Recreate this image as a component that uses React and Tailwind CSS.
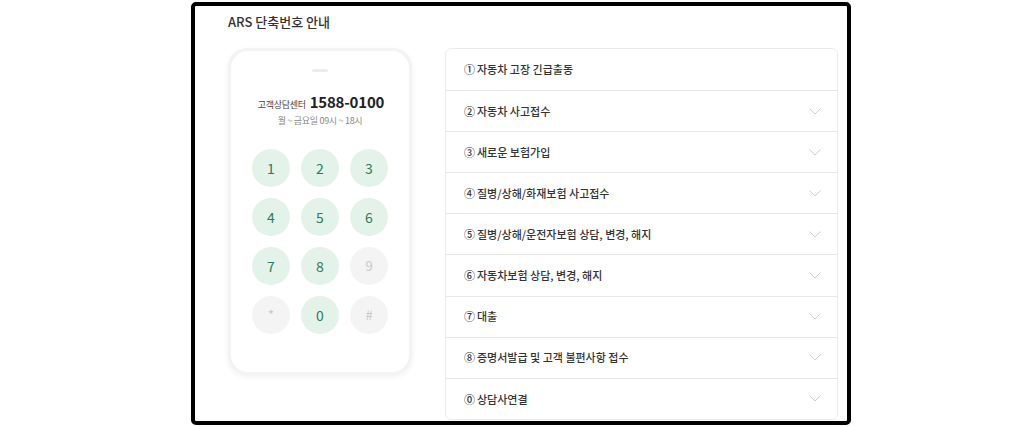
import React from "react";

const font = { fontFamily: '"Noto Sans CJK KR", "Noto Sans", sans-serif' };

function Chevron() {
  return (
    <svg width="12" height="7" viewBox="0 0 12 7" fill="none">
      <path d="M0.5 0.5 L6 6 L11.5 0.5" stroke="#cfcfcf" strokeWidth="1" />
    </svg>
  );
}

const items = [
  ["①", "자동차 고장 긴급출동", false],
  ["②", "자동차 사고접수", true],
  ["③", "새로운 보험가입", true],
  ["④", "질병/상해/화재보험 사고접수", true],
  ["⑤", "질병/상해/운전자보험 상담, 변경, 해지", true],
  ["⑥", "자동차보험 상담, 변경, 해지", true],
  ["⑦", "대출", true],
  ["⑧", "증명서발급 및 고객 불편사항 접수", true],
  ["⓪", "상담사연결", true],
];

const keys = [
  ["1", true], ["2", true], ["3", true],
  ["4", true], ["5", true], ["6", true],
  ["7", true], ["8", true], ["9", false],
  ["*", false], ["0", true], ["#", false],
];

export default function App() {
  return (
    <div className="w-[1024px] h-[427px] bg-white overflow-hidden" style={font}>
      <div className="ml-[191px] mt-[2px] w-[660px] h-[423px] border-4 border-black rounded-[5px] overflow-hidden bg-white">
        <div className="pl-[33px] pr-[9px]">
          <div className="pt-[7px] h-[42px] text-[13px] leading-[18px] font-medium text-[#333]">ARS 단축번호 안내</div>
          <div className="flex gap-[33px]">
            <div className="w-[184px] h-[327px] shrink-0 rounded-[20px] border-[3px] border-[#f3f3f3] shadow-[0_2px_6px_rgba(0,0,0,0.06)] bg-white flex flex-col items-center">
              <div className="mt-[18px] w-[16px] h-[3px] rounded-full bg-[#ececec]" />
              <div className="mt-[19px] flex items-baseline gap-[4px] pl-[2px]">
                <span className="text-[9px] text-[#444] tracking-[-0.3px]">고객상담센터</span>
                <span className="text-[15px] leading-[22px] font-bold text-[#222] tracking-[-0.2px]">1588-0100</span>
              </div>
              <div className="text-[9px] leading-[13px] text-[#888] mt-[1px] tracking-[-0.3px]">월 ~ 금요일 09시 ~ 18시</div>
              <div className="mt-[22px] grid grid-cols-[38px_38px_38px] gap-x-[11px] gap-y-[11px]">
                {keys.map(([k, on]) => (
                  <div
                    key={k}
                    className={
                      on
                        ? "w-[38px] h-[38px] rounded-full bg-[#e3f3e9] text-[#2f7a56] flex items-center justify-center text-[14px]"
                        : "w-[38px] h-[38px] rounded-full bg-[#f4f4f4] text-[#c9c9c9] flex items-center justify-center text-[13px]"
                    }
                  >
                    {k}
                  </div>
                ))}
              </div>
            </div>
            <div className="w-[393px] shrink-0 border border-[#ebebeb] rounded-[6px]">
              {items.map(([n, t, chev], i) => (
                <div
                  key={i}
                  className={
                    "h-[41.1px] flex items-center justify-between pl-[18px] pr-[16px] " +
                    (i > 0 ? "border-t border-[#e6e6e6]" : "")
                  }
                >
                  <span className="text-[11px] text-[#333] font-medium">
                    <span className="mr-[2px]">{n}</span>
                    {t}
                  </span>
                  {chev ? <Chevron /> : null}
                </div>
              ))}
            </div>
          </div>
        </div>
      </div>
    </div>
  );
}
